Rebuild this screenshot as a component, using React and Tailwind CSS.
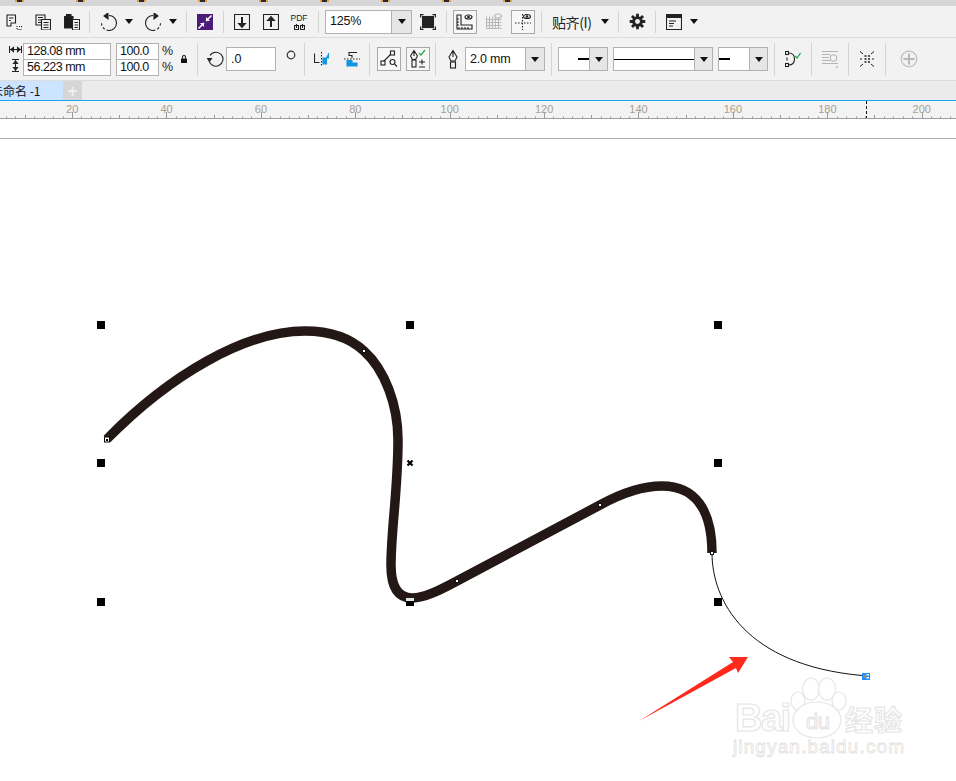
import React from "react";

const ink = "#222";

function Sep({ className = "", tall }) {
  return <div className={`w-px bg-[#d4d4d4] ${tall ? "h-[33px]" : "h-[22px]"} ${className}`}></div>;
}

function Caret({ className = "" }) {
  return <div className={`w-0 h-0 border-x-[4.5px] border-x-transparent border-t-[5px] border-t-[#111] ${className}`}></div>;
}

function Ico({ w = 16, h = 16, className = "", children }) {
  return (
    <svg width={w} height={h} viewBox={`0 0 ${w} ${h}`} fill="none" stroke={ink} strokeWidth="1.100" className={`block shrink-0 ${className}`}>
      {children}
    </svg>
  );
}

function Combo({ width, children, className = "", drop = "w-[20px]" }) {
  return (
    <div className={`flex h-6 border border-[#b2b2b2] bg-white shrink-0 ${width} ${className}`}>
      <div className="flex-1 min-w-0 flex items-center relative">{children}</div>
      <div className={`flex items-center justify-center bg-[#e6e6e6] border-l border-[#b2b2b2] ${drop}`}>
        <Caret />
      </div>
    </div>
  );
}

function NumBox({ children, className = "" }) {
  return <div className={`h-[17px] bg-white border border-[#b2b2b2] flex items-center pl-[3px] text-[12.5px] tracking-[-0.5px] leading-none text-[#111] ${className}`}>{children}</div>;
}

function BoxBtn({ children, className = "" }) {
  return <div className={`w-6 h-6 border border-[#a8a8a8] bg-[#f7f7f7] flex items-center justify-center shrink-0 ${className}`}>{children}</div>;
}

function TopRow() {
  return (
    <div className="h-[31px] flex items-center bg-[#f2f2f2] shrink-0">
      <Ico className="ml-[6px]">
        <path d="M1 1h8.500v8H5v3H1zM3 4h4.500M3 6.500h2" />
        <path d="M11 12v3.500h5M13 12.500h3v1.500" strokeDasharray="1 1" />
      </Ico>
      <Ico className="ml-[13px]">
        <path d="M1 1h9v10H1zM3 3.500h5M3 6h5M3 8.500h5" />
        <path d="M6.500 5.500H15.500V16H6.500z" fill="#f2f2f2" />
        <path d="M8.500 8.500h5M8.500 11h5M8.500 13.500h5" />
      </Ico>
      <Ico className="ml-[13px]">
        <path d="M.5 2.500h8.500V14H.5zM2.500.5h4.500v2H2.500z" fill="#1c1c1c" />
        <path d="M8.500 5.500H15.500V16H8.500z" fill="#f2f2f2" />
        <path d="M10.500 8.500h3.500M10.500 11h3.500M10.500 13.500h3.500" />
      </Ico>
      <Sep className="ml-[9px]" />
      <Ico className="ml-[10px]" w={18} h={18}>
        <path d="M9 2.500a7.500 7.500 0 0 1 0 15" />
        <path d="M9 17.500a7.500 7.500 0 0 1-7.500-7.500" strokeDasharray="2.500 2" />
        <path d="M8 0 4 3l4 3z" fill={ink} />
      </Ico>
      <Caret className="ml-[7px]" />
      <Ico className="ml-[11px]" w={18} h={18}>
        <path d="M9 2.500a7.500 7.500 0 0 0 0 15" />
        <path d="M9 17.500a7.500 7.500 0 0 0 7.500-7.500" strokeDasharray="2.500 2" />
        <path d="M10 0l4 3-4 3z" fill={ink} />
      </Ico>
      <Caret className="ml-[7px]" />
      <Sep className="ml-[9px]" />
      <svg width="16" height="16" viewBox="0 0 16 16" className="block ml-[10px] shrink-0">
        <rect width="16" height="16" fill="#4c1d78" />
        <path d="M1.500 14.500 7 9M9 7l5.500-5.500" stroke="#fff" strokeWidth="1.500" />
        <path d="M9 3v4h4zM3 9h4v4z" fill="#fff" />
      </svg>
      <Sep className="ml-[10px]" />
      <Ico className="ml-[10px]">
        <path d="M.5.5h15v15H.5z" />
        <path d="M8 3v8" strokeWidth="2" />
        <path d="M4.500 9.500h7L8 13.500z" fill={ink} />
      </Ico>
      <Ico className="ml-[13px]">
        <path d="M.5.5h15v15H.5z" />
        <path d="M8 13V5" strokeWidth="2" />
        <path d="M4.500 6.500h7L8 2.500z" fill={ink} />
      </Ico>
      <div className="ml-[12px] w-4 h-4 flex flex-col items-center shrink-0">
        <span className="text-[8.5px] leading-[9px] text-[#222]">PDF</span>
        <Ico w={11} h={7}>
          <path d="M.5 2.500h4v4h-4zM6.500 2.500h4v4h-4zM2.500 1v4M8.500 1v4" />
        </Ico>
      </div>
      <Sep className="ml-[11px]" />
      <Combo width="w-[87px]" className="ml-[6px]" drop="w-[20px]">
        <span className="pl-1 text-[12.5px] tracking-[-0.2px] text-[#111]">125%</span>
      </Combo>
      <Ico className="ml-[8px]">
        <rect x="2.500" y="2.500" width="11" height="11" fill="#222" />
        <path d="M.5 3.500v-3h3M12.500.5h3v3M15.500 12.500v3h-3M3.500 15.500h-3v-3" strokeWidth="1.300" />
      </Ico>
      <Sep className="ml-[10px]" />
      <BoxBtn className="ml-[6px]">
        <Ico w={20} h={20}>
          <path d="M2 3v14h15v-4H6V3zM4 15v2M7 15v2M10 15v2M13 15v2M2 7h2M2 10h2M2 13h2" />
          <ellipse cx="13.500" cy="5" rx="3.500" ry="2" />
          <circle cx="13.500" cy="5" r=".8" fill={ink} />
        </Ico>
      </BoxBtn>
      <Ico w={16} h={18} className="ml-[9px]">
        <g stroke="#b8b8b8">
          <path d="M.5 6.500h15M.5 9.500h15M.5 12.500h15M.5 15.500h15M.5 3.500v12M3.500 3.500v12M6.500 3.500v12M9.500 3.500v12M12.500 3.500v12" />
          <ellipse cx="12" cy="3" rx="3.500" ry="2" fill="#f2f2f2" />
        </g>
      </Ico>
      <BoxBtn className="ml-[9px]">
        <Ico w={20} h={20}>
          <path d="M9.500 2v16M2 11h16" strokeDasharray="1.500 1.500" />
          <ellipse cx="14" cy="4.500" rx="3.500" ry="2" />
          <circle cx="14" cy="4.500" r=".8" fill={ink} />
        </Ico>
      </BoxBtn>
      <Sep className="ml-[6px]" />
      <span className="ml-[10px] w-[41px] text-[14px] tracking-[-0.4px] leading-none text-[#222] whitespace-nowrap shrink-0 font-['Noto_Sans_CJK_SC','Liberation_Sans',sans-serif]">贴齐(I)</span>
      <Caret className="ml-[8px]" />
      <Sep className="ml-[9px]" />
      <svg width="17" height="17" viewBox="0 0 24 24" className="block ml-[10px] shrink-0">
        <path d="M12 6.500a5.500 5.500 0 1 0 0 11 5.500 5.500 0 0 0 0-11z" fill="none" stroke="#222" strokeWidth="4" />
        <path d="M12 1v5M12 18v5M1 12h5M18 12h5M4.200 4.200l3.600 3.600M16.200 16.200l3.600 3.600M4.200 19.800l3.600-3.600M16.200 7.800l3.600-3.600" stroke="#222" strokeWidth="4" />
      </svg>
      <Sep className="ml-[9px]" />
      <Ico className="ml-[10px]">
        <path d="M.5.5h15v15H.5z" />
        <path d="M1 2.500h14" strokeWidth="3" />
        <path d="M3 7h7M3 9.500h5M3 12h4" />
      </Ico>
      <Caret className="ml-[8px]" />
    </div>
  );
}

function PropRow() {
  return (
    <div className="h-[44px] flex items-center bg-[#f2f2f2] border-y border-[#dcdcdc] shrink-0">
      <div className="ml-[8px] w-[14px] h-[32px] flex flex-col items-center justify-around shrink-0">
        <Ico w={13} h={7}>
          <path d="M.5 0v7M12.500 0v7M1 3.500h11" />
          <path d="M2 3.500 4.500 1.500v4zM11 3.500 8.500 1.500v4z" fill={ink} />
        </Ico>
        <Ico w={7} h={13}>
          <path d="M0 .5h7M0 12.500h7M3.500 1v11" />
          <path d="M3.500 2 1.500 4.500h4zM3.500 11 1.500 8.500h4z" fill={ink} />
        </Ico>
      </div>
      <div className="ml-px w-[88px] flex flex-col shrink-0">
        <NumBox>128.08 mm</NumBox>
        <NumBox className="-mt-px">56.223 mm</NumBox>
      </div>
      <div className="ml-[5px] w-[43px] flex flex-col shrink-0">
        <NumBox>100.0</NumBox>
        <NumBox className="-mt-px">100.0</NumBox>
      </div>
      <div className="ml-[3px] w-[10px] flex flex-col text-[12.5px] leading-[16px] text-[#222] shrink-0">
        <span>%</span>
        <span>%</span>
      </div>
      <Ico w={6} h={8} className="ml-[9px]">
        <path d="M1.500 3.500V2a1.500 1.500 0 0 1 3 0v1.500" />
        <rect y="3.500" width="6" height="4.500" fill="#111" stroke="none" />
      </Ico>
      <Sep tall className="ml-[10px]" />
      <Ico w={17} h={18} className="ml-[9px]">
        <path d="M3 5.500A7 7 0 1 1 2 10" />
        <path d="M.5 8.500h4L2.500 11z" fill={ink} />
      </Ico>
      <div className="ml-[2px] w-[50px] h-6 bg-white border border-[#b2b2b2] flex items-center pl-1 text-[12.5px] text-[#111] shrink-0">.0</div>
      <svg width="10" height="10" viewBox="0 0 10 10" className="block ml-[10px] mb-[8px] shrink-0">
        <circle cx="5" cy="5" r="3.800" fill="none" stroke="#333" strokeWidth="1.200" />
      </svg>
      <Sep tall className="ml-[8px]" />
      <Ico className="ml-[9px]">
        <path d="M.5 2.500v9h5" />
        <path d="M14.500 2v5h-2v6H9V7h3" fill="#1296e0" stroke="#1296e0" />
        <path d="M7.500 1v15" strokeDasharray="1.500 1.500" />
      </Ico>
      <Ico className="ml-[14px]">
        <path d="M13 1.500H5v3h3v2.500" />
        <path d="M3 9.500h5v2.500h5v3H3z" fill="#1296e0" stroke="#1296e0" />
        <path d="M0 8h16" strokeDasharray="1.500 1.500" />
      </Ico>
      <Sep tall className="ml-[9px]" />
      <BoxBtn className="ml-[7px]">
        <Ico w={18} h={18}>
          <path d="M3 12 12 3" />
          <rect x="1" y="11" width="4" height="4" fill="#f7f7f7" />
          <rect x="10.500" y="1" width="4" height="4" fill="#f7f7f7" />
          <circle cx="12.500" cy="12" r="2.500" />
          <path d="m14.500 14 2.500 2.500" />
        </Ico>
      </BoxBtn>
      <BoxBtn className="ml-[5px]">
        <Ico w={20} h={20}>
          <path d="M6 1.500 2.500 7l2 3.500h3l2-3.500zM6 1.500V7" />
          <rect x="4" y="11" width="4" height="7" />
          <path d="m11 4 2 2 4-5" stroke="#27a84a" strokeWidth="1.300" />
          <path d="M11 13h6M14 10.500v5M11 18h6" />
        </Ico>
      </BoxBtn>
      <Sep tall className="ml-[5px]" />
      <Ico h={20} className="ml-[9px]">
        <path d="M8 1.500 4 8l2 4h4l2-4zM8 1.500V8" />
        <rect x="5.500" y="13" width="5" height="6" />
      </Ico>
      <Combo width="w-[80px]" className="ml-[4px]" drop="w-[19px]">
        <span className="pl-1 text-[12.5px] tracking-[-0.2px] text-[#111]">2.0 mm</span>
      </Combo>
      <Sep tall className="ml-[6px]" />
      <Combo width="w-[50px]" className="ml-[6px]" drop="w-[18px]">
        <div className="absolute right-0 w-[11px] h-[2px] bg-black"></div>
      </Combo>
      <Combo width="w-[100px]" className="ml-[5px]" drop="w-[18px]">
        <div className="w-full h-px bg-black"></div>
      </Combo>
      <Combo width="w-[50px]" className="ml-[5px]" drop="w-[18px]">
        <div className="w-[11px] h-[2px] bg-black"></div>
      </Combo>
      <Sep tall className="ml-[6px]" />
      <Ico h={18} className="ml-[10px]">
        <rect x=".5" y="1.500" width="3" height="3" />
        <rect x=".5" y="13.500" width="3" height="3" />
        <path d="M3.500 3c4 0 6 2.500 6 6s-2 6-6 6M2 7.500v3" />
        <path d="m10 6 2 2 3.500-5" stroke="#27a84a" strokeWidth="1.300" />
      </Ico>
      <Sep tall className="ml-[10px]" />
      <Ico h={18} className="ml-[10px]">
        <g stroke="#b5b5b5">
          <path d="M0 1.500h16M0 4.500h8M0 7.500h7M0 10.500h8M0 13.500h16" />
          <circle cx="11.500" cy="8" r="3.200" fill="#f2f2f2" />
        </g>
        <path d="M13 18h4v-4z" fill="#c8c8c8" stroke="none" />
      </Ico>
      <Sep tall className="ml-[10px]" />
      <Ico h={18} className="ml-[10px]">
        <path d="M1 1.500 4 4M15 1.500 12 4M1 16.500 4 14M15 16.500 12 14M1 9h2M13 9h2" strokeWidth="1" />
        <path d="M5.500 6h2M9 6h2M5.500 9h2M9 9h2M5.500 12h2M9 12h2" strokeWidth="1.500" />
      </Ico>
      <Sep tall className="ml-[10px]" />
      <svg width="18" height="18" viewBox="0 0 18 18" className="block ml-[14px] shrink-0">
        <circle cx="9" cy="9" r="7.800" fill="none" stroke="#c2c2c2" strokeWidth="1.300" />
        <path d="M9 3.500v11M3.500 9h11" stroke="#b8b8b8" strokeWidth="2" />
      </svg>
    </div>
  );
}

function TabRow() {
  return (
    <div className="h-[19px] flex bg-[#ebebeb] shrink-0 overflow-hidden">
      <div className="w-[63px] bg-[#cce4ff] overflow-hidden flex items-center">
        <span className="-ml-[9px] text-[12px] leading-none text-[#111] whitespace-nowrap font-['Noto_Sans_CJK_SC','Liberation_Sans',sans-serif]">未命名 -1</span>
      </div>
      <div className="w-[19px] bg-[#d6d6d6] flex items-center justify-center text-[#efefef] text-[18px] leading-none font-bold">+</div>
    </div>
  );
}

const labels = [20, 40, 60, 80, 100, 120, 140, 160, 180, 200];
const ticks = Array.from({ length: 102 }, (_, i) => i);

function Ruler() {
  return (
    <div className="h-[17px] relative bg-[#f3f3f3] border-t border-t-[#19a5f5] border-b border-b-[#9e9e9e] shrink-0 box-content">
      <div className="flex pl-[25px] pt-[2px] h-full">
        {labels.map((n) => (
          <div key={n} className="w-[94.4px] shrink-0 text-center text-[11px] leading-[13px] text-[#a89f92]">{n}</div>
        ))}
      </div>
      <svg width="956" height="17" className="absolute left-0 top-0 block">
        {ticks.map((i) => {
          const x = Math.round(72 - 9.44 * 7 + i * 9.44) + 0.5;
          const k = i - 7;
          const major = k % 10 === 0;
          const mid = k % 5 === 0;
          return <path key={i} d={`M${x} ${major ? 11 : mid ? 14 : 15.5}V17`} stroke="#999" strokeWidth="1" />;
        })}
        <path d="M866.500 0V17" stroke="#111" strokeDasharray="3 2" />
      </svg>
    </div>
  );
}

const handles = [
  [101, 325], [410, 325], [718, 325],
  [101, 463], [718, 463],
  [101, 602], [410, 602], [718, 602],
];
const nodes = [[364, 351], [457, 581], [600, 505], [712, 553]];

function Canvas() {
  return (
    <svg viewBox="0 139 956 642" className="block w-[956px] h-[642px] bg-white">
      <path
        d="M107 439C170 375 245 331 305 331C330 331 350 338 364 351C385 370 398 405 398 440C398 490 391 530 391 565C391 590 400 598 412 598C425 598 440 590 457 581L600 505C620 494 640 486 662 486C695 486 712 510 712 553"
        fill="none"
        stroke="#231815"
        strokeWidth="9.500"
      />
      <path d="M712 553C712 600 745 665 862 675.500" fill="none" stroke="#111" strokeWidth="1" />
      {handles.map(([x, y]) => (
        <rect key={`${x}-${y}`} x={x - 4} y={y - 4} width="8" height="8" fill="#000" />
      ))}
      <rect x="406" y="598" width="8" height="3" fill="#dfe6e8" />
      <path d="m407.500 460.500 5 5m0-5-5 5" stroke="#000" strokeWidth="2.200" />
      <rect x="104.500" y="437" width="5" height="5" fill="#fff" stroke="#000" />
      <path d="M106 439h2v2h-2z" fill="#000" />
      {nodes.map(([x, y]) => (
        <rect key={x} x={x - 1.5} y={y - 1.5} width="3" height="3" fill="#fff" stroke="#111" strokeWidth="1" />
      ))}
      <rect x="862" y="673" width="8" height="7" fill="#1e90ff" />
      <rect x="866.500" y="674" width="2.500" height="1.500" fill="#fff" />
      <rect x="866.500" y="677" width="2.500" height="1.500" fill="#fff" />
      <rect x="863.500" y="675.500" width="2" height="2" fill="#f08a20" />
      <polygon points="639,721 733,662 729,657 748,657 738,673 736,668" fill="#ff2a1c" />

      {/* watermark */}
      <g fill="#fff" stroke="#e6e6e6" strokeWidth="1.200">
        <ellipse cx="811" cy="689" rx="8.500" ry="11" />
        <ellipse cx="827" cy="689" rx="8.500" ry="11" />
        <ellipse cx="798" cy="701" rx="7" ry="9" />
        <ellipse cx="839" cy="701" rx="7" ry="9" />
        <ellipse cx="817" cy="720" rx="24" ry="18" />
        <text x="735" y="731" fontSize="38" fontWeight="700" fontFamily="Liberation Sans, sans-serif" textLength="56">Bai</text>
        <text x="806" y="729" fontSize="22" fontFamily="Liberation Sans, sans-serif" textLength="24">du</text>
        <text x="845" y="731" fontSize="28" fontWeight="700" fontFamily="Noto Sans CJK SC, sans-serif" textLength="57">经验</text>
        <text x="733" y="753" fontSize="19" fontFamily="Liberation Sans, sans-serif" textLength="171" strokeWidth="0.800" stroke="#e2e2e2">jingyan.baidu.com</text>
      </g>
    </svg>
  );
}

export default function App() {
  return (
    <div className="w-[956px] h-[781px] overflow-hidden flex flex-col bg-white font-['Liberation_Sans',sans-serif]">
      <div className="h-[6px] bg-[#d6d6d6] flex pl-[15px] gap-[52px] shrink-0">
        {[0, 1, 2, 3, 4, 5, 6, 7, 8].map((n) => (
          <div key={n} className="w-[9px] h-[2px] bg-[#2a2a2a] border-x-2 border-[#e8a13a]"></div>
        ))}
      </div>
      <TopRow />
      <PropRow />
      <TabRow />
      <Ruler />
      <div className="h-[19px] bg-white border-b border-[#b0b0b0] shrink-0 box-content"></div>
      <Canvas />
    </div>
  );
}
